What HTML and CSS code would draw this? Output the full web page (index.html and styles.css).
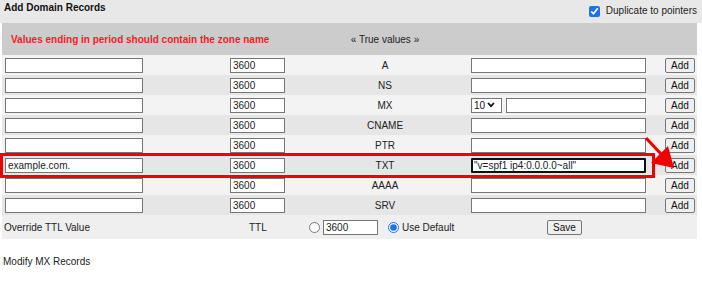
FILE: index.html
```html
<!DOCTYPE html>
<html>
<head>
<meta charset="utf-8">
<title>Add Domain Records</title>
<link rel="stylesheet" href="styles.css">
</head>
<body>
<div class="page">
  <div class="title-bar">
    <span class="title">Add Domain Records</span>
    <label class="dup"><input type="checkbox" checked>Duplicate to pointers</label>
  </div>
  <table class="records">
    <colgroup>
      <col class="w1"><col class="w2"><col class="w3"><col class="w4"><col class="w5">
    </colgroup>
    <tr class="note">
      <td colspan="2" class="warn">Values ending in period should contain the zone name</td>
      <td class="c-type">« True values »</td>
      <td colspan="2"></td>
    </tr>
    <tr class="odd">
      <td class="c-name"><input class="field f-name" type="text" value=""></td>
      <td class="c-ttl"><input class="field f-ttl" type="text" value="3600"></td>
      <td class="c-type">A</td>
      <td class="c-val"><input class="field f-val" type="text" value=""></td>
      <td class="c-add"><button class="btn">Add</button></td>
    </tr>
    <tr class="even">
      <td class="c-name"><input class="field f-name" type="text" value=""></td>
      <td class="c-ttl"><input class="field f-ttl" type="text" value="3600"></td>
      <td class="c-type">NS</td>
      <td class="c-val"><input class="field f-val" type="text" value=""></td>
      <td class="c-add"><button class="btn">Add</button></td>
    </tr>
    <tr class="odd">
      <td class="c-name"><input class="field f-name" type="text" value=""></td>
      <td class="c-ttl"><input class="field f-ttl" type="text" value="3600"></td>
      <td class="c-type">MX</td>
      <td class="c-val"><span class="sel">10<svg class="chev" viewBox="0 0 8 6" width="8" height="6"><path d="M1 1 L4 4.2 L7 1" fill="none" stroke="#111" stroke-width="1.8"/></svg></span><input class="field f-mx" type="text" value=""></td>
      <td class="c-add"><button class="btn">Add</button></td>
    </tr>
    <tr class="even">
      <td class="c-name"><input class="field f-name" type="text" value=""></td>
      <td class="c-ttl"><input class="field f-ttl" type="text" value="3600"></td>
      <td class="c-type">CNAME</td>
      <td class="c-val"><input class="field f-val" type="text" value=""></td>
      <td class="c-add"><button class="btn">Add</button></td>
    </tr>
    <tr class="odd">
      <td class="c-name"><input class="field f-name" type="text" value=""></td>
      <td class="c-ttl"><input class="field f-ttl" type="text" value="3600"></td>
      <td class="c-type">PTR</td>
      <td class="c-val"><input class="field f-val" type="text" value=""></td>
      <td class="c-add"><button class="btn">Add</button></td>
    </tr>
    <tr class="even">
      <td class="c-name"><input class="field f-name" type="text" value="example.com."></td>
      <td class="c-ttl"><input class="field f-ttl" type="text" value="3600"></td>
      <td class="c-type">TXT</td>
      <td class="c-val"><input class="field f-val focus" type="text" value="&quot;v=spf1 ip4:0.0.0.0~all&quot;"></td>
      <td class="c-add"><button class="btn">Add</button></td>
    </tr>
    <tr class="odd">
      <td class="c-name"><input class="field f-name" type="text" value=""></td>
      <td class="c-ttl"><input class="field f-ttl" type="text" value="3600"></td>
      <td class="c-type">AAAA</td>
      <td class="c-val"><input class="field f-val" type="text" value=""></td>
      <td class="c-add"><button class="btn">Add</button></td>
    </tr>
    <tr class="even">
      <td class="c-name"><input class="field f-name" type="text" value=""></td>
      <td class="c-ttl"><input class="field f-ttl" type="text" value="3600"></td>
      <td class="c-type">SRV</td>
      <td class="c-val"><input class="field f-val" type="text" value=""></td>
      <td class="c-add"><button class="btn">Add</button></td>
    </tr>
    <tr class="override">
      <td class="o-label">Override TTL Value</td>
      <td class="o-ttl">TTL</td>
      <td class="o-opts"><input class="radio" type="radio" name="ttl"><input class="field f-ttl" type="text" value="3600"><input class="radio r2" type="radio" name="ttl" checked><span>Use Default</span></td>
      <td class="o-save"><button class="btn">Save</button></td>
      <td></td>
    </tr>
  </table>
  <p class="modify">Modify MX Records</p>
  <div class="highlight"></div>
  <svg class="arrow" viewBox="0 0 702 285" width="702" height="285">
    <line x1="646" y1="138" x2="662" y2="155" stroke="#f20000" stroke-width="3.2"/>
    <polygon points="674,168 651,163 668,146" fill="#f20000"/>
  </svg>
</div>
</body>
</html>
```

FILE: styles.css
```css
body {
  margin: 0;
  font-family: "Liberation Sans", Arial, sans-serif;
  font-size: 10px;
  color: #222;
  background: #fff;
}

.page {
  position: relative;
  width: 702px;
  height: 285px;
}

.title-bar {
  display: flex;
  justify-content: space-between;
  align-items: flex-start;
  height: 23px;
  box-sizing: border-box;
  background: #e8e8e8;
  padding: 0 5px 0 4px;
}

.title {
  font-weight: bold;
  line-height: 12px;
  padding-top: 2px;
  color: #111;
}

.dup {
  display: flex;
  align-items: center;
  padding-top: 5px;
  line-height: 12px;
  color: #222;
}

.dup input {
  width: 11px;
  height: 11px;
  margin: 0 6px 0 0;
  accent-color: #1a73e8;
}

.records {
  border-collapse: collapse;
  table-layout: fixed;
  width: 695px;
  margin-left: 2px;
}

.w1 { width: 224px; }
.w2 { width: 74px; }
.w3 { width: 170px; }
.w4 { width: 190px; }
.w5 { width: 37px; }

.records td {
  padding: 0;
  height: 20px;
  vertical-align: middle;
  white-space: nowrap;
}

.note td {
  height: 32px;
  background: #cccccc;
}

.warn {
  color: #f21d2a;
  font-weight: bold;
  padding-left: 9px !important;
}

.odd td { background: #f3f3f3; }
.even td { background: #e6e6e6; }

.c-name { padding-left: 3px !important; }
.c-ttl { padding-left: 4px !important; }
.c-type { text-align: center; color: #222; }
.c-val { padding-left: 1px !important; }
.c-add { padding-left: 5px !important; }

.field {
  height: 15px;
  box-sizing: border-box;
  border: 1px solid #767676;
  border-radius: 0;
  padding: 0 2px;
  margin: 0;
  font-family: "Liberation Sans", Arial, sans-serif;
  font-size: 10px;
  color: #222;
  background: #fff;
  vertical-align: middle;
  outline: none;
}

.f-name { width: 138px; }
.f-ttl { width: 55px; }
.f-val { width: 175px; }
.f-mx { width: 140px; margin-left: 4px; }

.field.focus {
  border: 2px solid #111;
  border-radius: 1px;
  padding: 0 1px;
}

.sel {
  display: inline-flex;
  align-items: center;
  gap: 2px;
  width: 31px;
  height: 15px;
  box-sizing: border-box;
  border: 1px solid #767676;
  background: #fff;
  padding: 0 2px;
  vertical-align: middle;
  line-height: 13px;
  color: #111;
}

.btn {
  height: 15px;
  box-sizing: border-box;
  border: 1px solid #767676;
  border-radius: 2px;
  background: #efefef;
  padding: 0 5px;
  margin: 0;
  font-family: "Liberation Sans", Arial, sans-serif;
  font-size: 10px;
  line-height: 13px;
  color: #111;
  vertical-align: middle;
}

.override td {
  height: 24px;
  background: #efefef;
}

.o-label { padding-left: 2px !important; }
.o-ttl { padding-left: 23px !important; }
.o-opts { padding-left: 9px !important; }
.o-save { padding-left: 77px !important; }

.radio {
  width: 11px;
  height: 11px;
  margin: 0 3px 0 0;
  vertical-align: middle;
  accent-color: #1a73e8;
}

.radio.r2 { margin-left: 10px; }

.o-opts span { vertical-align: middle; }

.modify {
  margin: 17px 0 0 3px;
  line-height: 12px;
  color: #222;
}

.highlight {
  position: absolute;
  left: 0;
  top: 153px;
  width: 655px;
  height: 25px;
  box-sizing: border-box;
  border: 3px solid #f20000;
  pointer-events: none;
}

.arrow {
  position: absolute;
  left: 0;
  top: 0;
  pointer-events: none;
}
```
